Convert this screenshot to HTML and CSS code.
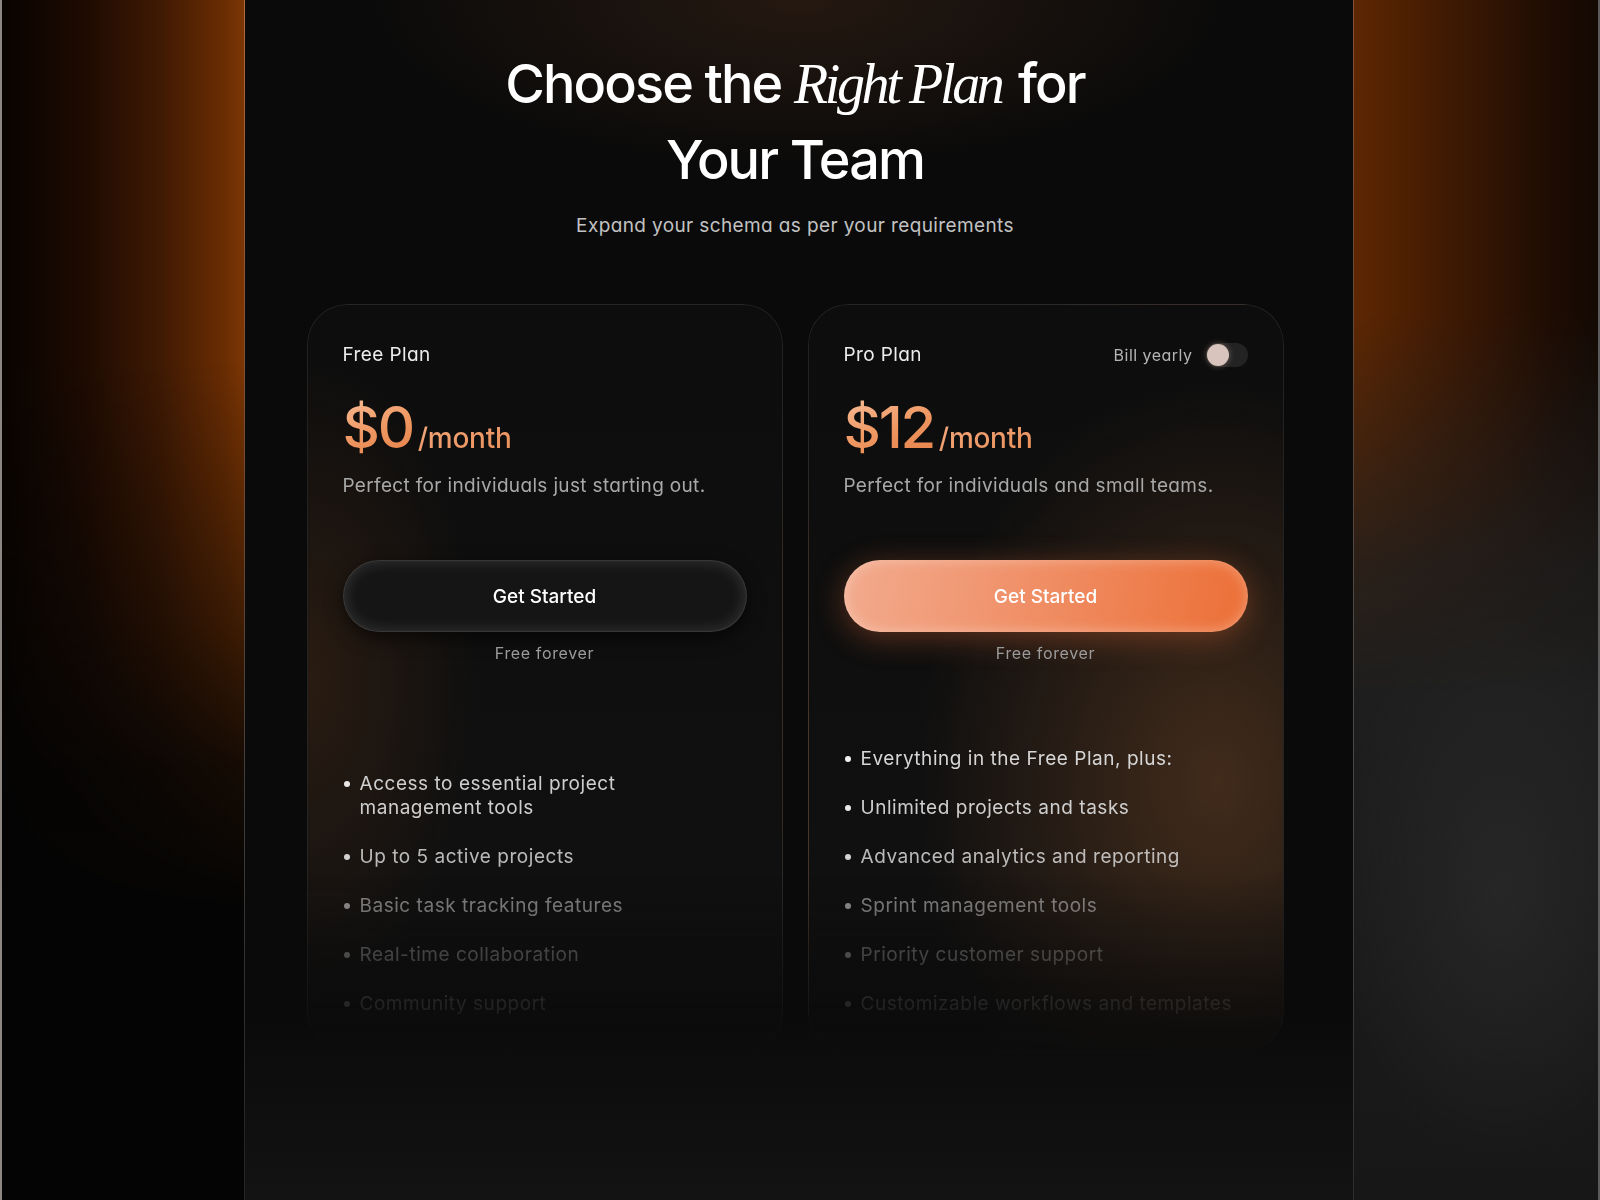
FILE: index.html
```html
<!DOCTYPE html>
<html lang="en">
<head>
<meta charset="utf-8">
<title>Choose the Right Plan</title>
<link rel="stylesheet" href="styles.css">
</head>
<body>
<div class="stage">
  <aside class="side side-left"></aside>
  <main class="center">
    <header class="hero">
      <h1 class="title">Choose the <em class="serif">Right Plan</em> for<br>Your Team</h1>
      <p class="subtitle">Expand your schema as per your requirements</p>
    </header>
    <section class="plans">
      <article class="card card-free">
        <div class="card-head"><span class="plan-name">Free Plan</span></div>
        <div class="price"><span class="amount">$0</span><span class="per">/month</span></div>
        <p class="desc">Perfect for individuals just starting out.</p>
        <button class="btn btn-dark">Get Started</button>
        <p class="note">Free forever</p>
        <ul class="features">
          <li>Access to essential project<br>management tools</li>
          <li>Up to 5 active projects</li>
          <li>Basic task tracking features</li>
          <li>Real-time collaboration</li>
          <li>Community support</li>
        </ul>
      </article>
      <article class="card card-pro">
        <div class="card-head">
          <span class="plan-name">Pro Plan</span>
          <span class="billing">Bill yearly <span class="toggle"><span class="knob"></span></span></span>
        </div>
        <div class="price"><span class="amount">$12</span><span class="per">/month</span></div>
        <p class="desc">Perfect for individuals and small teams.</p>
        <button class="btn btn-orange">Get Started</button>
        <p class="note">Free forever</p>
        <ul class="features">
          <li>Everything in the Free Plan, plus:</li>
          <li>Unlimited projects and tasks</li>
          <li>Advanced analytics and reporting</li>
          <li>Sprint management tools</li>
          <li>Priority customer support</li>
          <li>Customizable workflows and templates</li>
        </ul>
      </article>
    </section>
  </main>
  <aside class="side side-right"></aside>
</div>
</body>
</html>
```
FILE: styles.css
```css
* { box-sizing: border-box; margin: 0; padding: 0; }
html, body { width: 1600px; height: 1200px; overflow: hidden; background: #0a0a0a; }
body { font-family: Inter, "Noto Sans", sans-serif; color: #fff; }

.stage { display: flex; height: 1200px; }

.side { flex: none; height: 1200px; }
.side-left {
  width: 245px;
  border-right: 1px solid;
  border-image: linear-gradient(to bottom, #b06a3e 0%, #6e4a36 40%, #3c3c3c 68%, #262626 95%) 1;
  background:
    linear-gradient(to bottom, rgba(4,4,4,0) 0%, rgba(4,4,4,0) 30%, rgba(4,4,4,0.5) 52%, rgba(4,4,4,0.85) 64%, #040404 76%),
    linear-gradient(to right, #080300 0%, #1e0b02 35%, #3e1903 65%, #6a2d03 92%, #7c3604 100%);
  box-shadow: inset 2px 0 0 #8c8782;
}
.side-right {
  width: 247px;
  border-left: 1px solid;
  border-image: linear-gradient(to bottom, #8a5030 0%, #5a4538 35%, #4a4a4a 60%, #2e2e2e 100%) 1;
  background:
    radial-gradient(ellipse 170px 280px at 60% 74%, rgba(42,42,42,0.75), rgba(42,42,42,0) 100%),
    linear-gradient(to bottom, rgba(29,29,29,0) 0%, rgba(29,29,29,0) 26%, rgba(30,30,30,0.8) 47%, #1e1e1e 58%, #171717 100%),
    linear-gradient(to right, #5e2702 0%, #3e1903 40%, #1e0c03 80%, #130903 100%);
  box-shadow: inset -2px 0 0 #5a5a5a;
}

.center {
  flex: 1;
  display: flex;
  flex-direction: column;
  align-items: center;
  padding: 46px 8px 0 0;
  background:
    radial-gradient(ellipse 440px 170px at 50% 0%, rgba(70,42,25,0.45), rgba(70,42,25,0) 100%),
    linear-gradient(to bottom, #0a0a0a 0%, #0a0a0a 84%, #131313 100%);
}

.hero { text-align: center; }
.title {
  font-size: 54px;
  line-height: 76px;
  font-weight: 500;
  letter-spacing: -0.035em;
  color: #fff;
}
.serif {
  font-family: "Liberation Serif", serif;
  font-style: italic;
  font-weight: 400;
  font-size: 56px;
  letter-spacing: -0.06em;
  padding-right: 4px;
}
.subtitle {
  margin-top: 15px;
  font-size: 19px;
  line-height: 26px;
  color: #c2c2c2;
  letter-spacing: 0.02em;
  font-feature-settings: "cv11";
}

.plans { display: flex; gap: 25px; margin-top: 65px; }

.card {
  width: 476px;
  height: 748px;
  border-radius: 40px;
  border: 1px solid rgba(255,255,255,0.09);
  padding: 38px 35px 35px;
  display: flex;
  flex-direction: column;
  -webkit-mask-image: linear-gradient(to bottom, #000 0%, #000 76%, rgba(0,0,0,0.08) 100%);
  mask-image: linear-gradient(to bottom, #000 0%, #000 76%, rgba(0,0,0,0.08) 100%);
}
.card-free {
  background:
    radial-gradient(ellipse 170px 320px at 0% 50%, rgba(110,60,25,0.28), rgba(110,60,25,0) 100%),
    linear-gradient(to bottom, #0d0d0d, #111);
}
.card-pro {
  background:
    radial-gradient(ellipse 300px 400px at 86% 64%, rgba(96,60,34,0.62), rgba(96,60,34,0) 100%),
    linear-gradient(to bottom, #0d0d0d, #111);
}

.card-head { display: flex; align-items: center; justify-content: space-between; height: 24px; }
.plan-name { font-size: 19px; line-height: 24px; color: #ececec; letter-spacing: 0.02em; font-feature-settings: "cv11"; }
.billing { display: flex; align-items: center; gap: 13px; font-size: 16px; color: #b5b5b5; letter-spacing: 0.03em; font-feature-settings: "cv11"; }
.toggle { width: 42px; height: 24px; border-radius: 12px; background: #232323; padding: 1px; display: flex; align-items: center; }
.knob { width: 22px; height: 22px; border-radius: 50%; background: #d9c4bd; box-shadow: 0 0 6px rgba(255,215,200,0.35); }

.price { margin-top: 31px; display: flex; align-items: baseline; gap: 5px; height: 58px; line-height: 58px; }
.amount {
  font-size: 58px;
  font-weight: 500;
  letter-spacing: -0.04em;
  background: linear-gradient(160deg, #f8bc96 0%, #ee955f 55%, #e6824b 100%);
  -webkit-background-clip: text;
  background-clip: text;
  color: transparent;
}
.per {
  font-size: 28px;
  font-weight: 500;
  letter-spacing: -0.01em;
  background: linear-gradient(160deg, #f4ad85 0%, #e8894f 100%);
  -webkit-background-clip: text;
  background-clip: text;
  color: transparent;
}

.desc { margin-top: 17px; font-size: 19px; line-height: 26px; color: #a8a8a8; letter-spacing: 0.018em; font-feature-settings: "cv11"; }

.btn {
  margin-top: 61px;
  width: 100%;
  height: 72px;
  border-radius: 36px;
  border: none;
  font-family: Inter, "Noto Sans", sans-serif;
  font-size: 19px;
  font-weight: 500;
  color: #fff;
}
.btn-dark {
  background: #151515;
  box-shadow: inset 0 0 16px rgba(255,255,255,0.17), inset 0 0 0 1px rgba(255,255,255,0.08), 0 6px 18px rgba(0,0,0,0.6);
}
.btn-orange {
  background: linear-gradient(100deg, #f2ab8e 0%, #f09068 45%, #ec6f36 100%);
  box-shadow: inset 0 0 14px rgba(255,255,255,0.35), 0 6px 30px rgba(236,110,55,0.35);
}

.note { margin-top: 11px; text-align: center; font-size: 16px; line-height: 20px; color: #9b9b9b; letter-spacing: 0.04em; font-feature-settings: "cv11"; }

.features { margin-top: auto; list-style: none; display: flex; flex-direction: column; gap: 25px; }
.features li { display: flex; gap: 10px; font-size: 19px; line-height: 24px; color: #d6d6d6; letter-spacing: 0.028em; }
.features li::before {
  content: "";
  flex: none;
  width: 6px;
  height: 6px;
  margin: 9px 0 0 1px;
  border-radius: 50%;
  background: #f2f2f2;
}
.features li:nth-last-child(1) { opacity: 0.36; }
.features li:nth-last-child(2) { opacity: 0.46; }
.features li:nth-last-child(3) { opacity: 0.62; }
.features li:nth-last-child(4) { opacity: 0.86; }
.features li:nth-last-child(5) { opacity: 0.96; }
```
